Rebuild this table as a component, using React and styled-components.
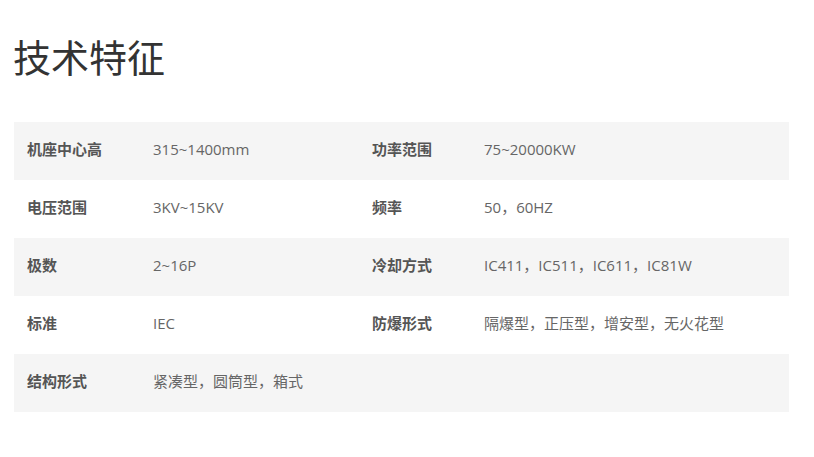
import React from "react";
import styled, { createGlobalStyle } from "styled-components";

const rows = [
  ["机座中心高", "315~1400mm", "功率范围", "75~20000KW"],
  ["电压范围", "3KV~15KV", "频率", "50，60HZ"],
  ["极数", "2~16P", "冷却方式", "IC411，IC511，IC611，IC81W"],
  ["标准", "IEC", "防爆形式", "隔爆型，正压型，增安型，无火花型"],
  ["结构形式", "紧凑型，圆筒型，箱式", "", ""],
];

const GlobalStyle = createGlobalStyle`
  body {
    margin: 0;
    background: #fff;
    font-family: "Open Sans", "Noto Sans CJK SC", sans-serif;
  }
`;

const Page = styled.div`
  padding: 0 25px 0 14px;
  width: 775px;
`;

const Title = styled.h2`
  margin: 0 0 0 -1px;
  padding-top: 30px;
  height: 122px;
  box-sizing: border-box;
  font-family: "Noto Sans CJK SC", sans-serif;
  font-size: 38px;
  line-height: 52px;
  font-weight: 400;
  color: #333;
`;

const Table = styled.div`
  display: flex;
  flex-direction: column;
`;

const Row = styled.div`
  display: grid;
  grid-template-columns: 126px 219px 112px 318px;
  height: 58px;
  box-sizing: border-box;
  padding-bottom: 5px;
  align-items: center;
  background: ${(p) => (p.$shaded ? "#f5f5f5" : "#fff")};
`;

const Label = styled.div`
  padding-left: 13px;
  font-size: 15px;
  line-height: 20px;
  font-weight: 700;
  color: #555;
`;

const Value = styled.div`
  padding-left: 13px;
  font-size: 15px;
  line-height: 20px;
  color: #666;
`;

export default function App() {
  return (
    <Page>
      <GlobalStyle />
      <Title>技术特征</Title>
      <Table>
        {rows.map((r, i) => (
          <Row key={i} $shaded={i % 2 === 0}>
            <Label>{r[0]}</Label>
            <Value>{r[1]}</Value>
            <Label>{r[2]}</Label>
            <Value>{r[3]}</Value>
          </Row>
        ))}
      </Table>
    </Page>
  );
}
